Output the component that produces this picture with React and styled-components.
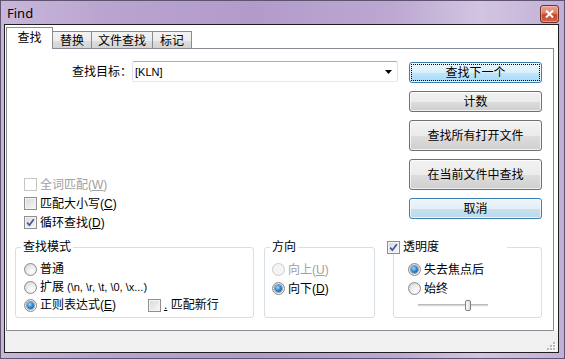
import styled, { createGlobalStyle } from "styled-components";

const GlobalStyle = createGlobalStyle`
  html, body {
    margin: 0;
    padding: 0;
  }
  body {
    width: 565px;
    height: 359px;
    overflow: hidden;
    font-family: "Liberation Sans", "Noto Sans CJK SC", sans-serif;
    font-size: 12px;
    color: #000;
  }
`;

const Window = styled.div`
  width: 565px;
  height: 359px;
  box-sizing: border-box;
  display: flex;
  flex-direction: column;
  padding: 0 6px 6px 4px;
  background: linear-gradient(
    90deg,
    #c8b7da 0%,
    #b9a3cf 20%,
    #b29bca 45%,
    #bda8d2 70%,
    #d2c5e1 85%,
    #c2afd7 100%
  );
  box-shadow: inset 0 0 0 1px #5e5470;
`;

const TitleBar = styled.div`
  height: 24px;
  display: flex;
  align-items: flex-start;
  justify-content: space-between;
  flex-shrink: 0;
`;

const Title = styled.span`
  font-family: "Noto Sans", "Liberation Sans", sans-serif;
  font-size: 13px;
  line-height: 16px;
  margin: 5px 0 0 3px;
  color: #000;
`;

const CloseBtn = styled.div`
  width: 19px;
  height: 18px;
  margin-top: 5px;
  box-sizing: border-box;
  border: 1px solid #6e3226;
  border-radius: 3px;
  background: linear-gradient(#e9a594 0%, #dd7d66 45%, #c6452a 55%, #d3674c 100%);
  box-shadow: inset 0 0 0 1px rgba(255, 210, 200, 0.45);
  display: flex;
  align-items: center;
  justify-content: center;
`;

const Client = styled.div`
  flex: 1;
  display: flex;
  flex-direction: column;
  background: #fff;
  border: 1px solid #1e1e1e;
`;

const Body = styled.div`
  flex: 1;
  display: flex;
  flex-direction: column;
  padding: 2px 4px 0 1px;
`;

const TabBar = styled.div`
  display: flex;
  align-items: flex-end;
  height: 22px;
  margin-bottom: -1px;
`;

const Tab = styled.div`
  width: ${(p) => p.$w}px;
  height: ${(p) => (p.$active ? 22 : 18)}px;
  box-sizing: border-box;
  text-align: center;
  line-height: 14px;
  padding-top: ${(p) => (p.$active ? 3 : 2)}px;
  border: 1px solid #898c95;
  border-bottom: none;
  border-left: ${(p) => (p.$first ? "1px solid #898c95" : "none")};
  background: ${(p) =>
    p.$active
      ? "#fff"
      : "linear-gradient(#f3f3f3 0%, #ebebeb 50%, #dedede 51%, #d2d2d2 100%)"};
  position: ${(p) => (p.$active ? "relative" : "static")};
  z-index: ${(p) => (p.$active ? 1 : "auto")};
`;

const Panel = styled.div`
  flex: 1;
  display: flex;
  flex-direction: column;
  border: 1px solid #898c95;
  background: #fff;
`;

const TopSection = styled.div`
  display: grid;
  grid-template-columns: 391px 133px;
  column-gap: 11px;
  padding-top: 12px;
`;

const LeftCol = styled.div`
  display: flex;
  flex-direction: column;
`;

const ComboRow = styled.div`
  display: flex;
  align-items: center;
  margin-left: 65px;
  height: 21px;
`;

const Label = styled.span`
  width: 60px;
  line-height: 14px;
`;

const Combo = styled.div`
  width: 266px;
  height: 21px;
  box-sizing: border-box;
  border: 1px solid #abadb3;
  border-color: #abadb3 #dbdfe6 #e3e9ef #e2e3ea;
  border-radius: 2px;
  display: flex;
  align-items: center;
  justify-content: space-between;
  padding: 0 5px 0 2px;
  font-size: 11px;
`;

const CheckList = styled.div`
  display: flex;
  flex-direction: column;
  margin-top: 93px;
  padding-left: 17px;
`;

const Row = styled.div`
  display: flex;
  align-items: center;
  gap: 3px;
  height: ${(p) => p.$h || 19}px;
  margin-left: ${(p) => p.$ml || 0}px;
  line-height: 14px;
  color: ${(p) => (p.$disabled ? "#a0a0a0" : "#000")};
  white-space: nowrap;
`;

const Box = styled.span`
  width: 13px;
  height: 13px;
  flex-shrink: 0;
  box-sizing: border-box;
  border: 1px solid ${(p) => (p.$disabled ? "#c7c7c7" : "#8e8f8f")};
  background: ${(p) =>
    p.$disabled ? "#fff" : "linear-gradient(135deg, #d8d8d8 0%, #f8f8f8 100%)"};
  box-shadow: inset 0 0 0 1px ${(p) => (p.$disabled ? "#fff" : "#f4f4f4")};
  display: flex;
  align-items: center;
  justify-content: center;
`;

const Dot = styled.span`
  width: 13px;
  height: 13px;
  flex-shrink: 0;
  box-sizing: border-box;
  border-radius: 50%;
  border: 1px solid ${(p) => (p.$disabled ? "#cacaca" : "#8b8b8b")};
  background: ${(p) =>
    p.$disabled
      ? "#f4f4f4"
      : "radial-gradient(circle at 65% 70%, #ffffff 0%, #ececec 45%, #cfcfcf 100%)"};
  display: flex;
  align-items: center;
  justify-content: center;
  &::after {
    content: "";
    display: ${(p) => (p.$checked ? "block" : "none")};
    width: 7px;
    height: 7px;
    border-radius: 50%;
    background: radial-gradient(circle at 40% 35%, #9fdcff 0%, #2f8cd4 45%, #0b4485 100%);
    box-shadow: 0 0 0 1px rgba(30, 60, 110, 0.45);
  }
`;

const U = styled.u`
  text-decoration: underline;
`;

const Small = styled.span`
  font-size: 11px;
  margin-left: 3px;
`;

const ButtonCol = styled.div`
  display: flex;
  flex-direction: column;
  gap: 8px;
  margin-top: 1px;
`;

const Button = styled.div`
  height: ${(p) => (p.$tall ? 31 : 21)}px;
  box-sizing: border-box;
  border: 1px solid ${(p) => (p.$variant === "grey" ? "#707070" : "#3c7fb1")};
  border-radius: 3px;
  display: flex;
  align-items: center;
  justify-content: center;
  line-height: 14px;
  background: ${(p) =>
    p.$variant === "focus"
      ? "linear-gradient(#eaf6fd 0%, #d9f0fc 50%, #bee6fd 51%, #a7d9f5 100%)"
      : p.$variant === "soft"
      ? "linear-gradient(#eef5fb 0%, #e3eef7 50%, #c9e1f0 51%, #bcd8ea 100%)"
      : "linear-gradient(#f2f2f2 0%, #ebebeb 50%, #dddddd 51%, #cfcfcf 100%)"};
  box-shadow: inset 0 0 0 1px rgba(255, 255, 255, 0.7);
  outline: ${(p) => (p.$variant === "focus" ? "1px dotted #000" : "none")};
  outline-offset: -3px;
`;

const BottomSection = styled.div`
  display: flex;
  margin: 9px 0 0 8px;
`;

const Group = styled.fieldset`
  width: ${(p) => p.$w}px;
  margin: 0 ${(p) => p.$mr || 0}px 0 0;
  box-sizing: border-box;
  border: 1px solid #d5dfe5;
  border-radius: 3px;
  padding: 6px 0 3px ${(p) => p.$pl}px;
  min-inline-size: 0;
`;

const Legend = styled.legend`
  padding: 0 ${(p) => p.$pr || 2}px 0 ${(p) => (p.$pl !== undefined ? p.$pl : 2)}px;
  margin-left: ${(p) => p.$ml}px;
  line-height: 13px;
  background: #fff;
  display: flex;
  align-items: center;
  gap: 3px;
`;

const SliderRow = styled.div`
  display: flex;
  align-items: center;
  height: 14px;
  margin-left: 10px;
`;

const Track = styled.span`
  width: ${(p) => p.$w}px;
  height: 3px;
  box-sizing: border-box;
  border-top: 1px solid #b9b9b9;
  border-bottom: 1px solid #f4f4f4;
  background: #dadada;
`;

const Thumb = styled.span`
  width: 6px;
  height: 11px;
  box-sizing: border-box;
  border: 1px solid #7f7f7f;
  border-radius: 2px;
  background: linear-gradient(90deg, #fdfdfd, #dcdcdc);
`;

const StatusBar = styled.div`
  height: 20px;
  flex-shrink: 0;
  background: #f0f0f0;
  display: flex;
  justify-content: flex-end;
  align-items: flex-end;
  padding: 0 2px 1px 0;
`;

const Check = () => (
  <svg width="9" height="9" viewBox="0 0 9 9">
    <path d="M1.2 4.6 L3.4 7.2 L7.8 1.2" fill="none" stroke="#3f56a0" strokeWidth="1.7" />
  </svg>
);

const CheckBox = ({ checked, disabled, children }) => (
  <Row $disabled={disabled}>
    <Box $disabled={disabled}>{checked && <Check />}</Box>
    <span>{children}</span>
  </Row>
);

const RadioItem = ({ checked, disabled, h, children }) => (
  <Row $disabled={disabled} $h={h}>
    <Dot $checked={checked} $disabled={disabled} />
    <span>{children}</span>
  </Row>
);

const Grip = () => (
  <svg width="10" height="10" viewBox="0 0 10 10">
    {[
      [7, 1],
      [4, 4],
      [7, 4],
      [1, 7],
      [4, 7],
      [7, 7],
    ].map(([x, y]) => (
      <g key={`${x}-${y}`}>
        <rect x={x + 1} y={y + 1} width="2" height="2" fill="#fff" />
        <rect x={x} y={y} width="2" height="2" fill="#b8b8b8" />
      </g>
    ))}
  </svg>
);

export default function App() {
  return (
    <>
      <GlobalStyle />
      <Window>
        <TitleBar>
          <Title>Find</Title>
          <CloseBtn>
            <svg width="9" height="8" viewBox="0 0 9 8">
              <path
                d="M1 0.5 L8 7.5 M8 0.5 L1 7.5"
                stroke="#fff"
                strokeWidth="2"
                fill="none"
              />
            </svg>
          </CloseBtn>
        </TitleBar>
        <Client>
          <Body>
            <TabBar>
              <Tab $active $first $w={47}>查找</Tab>
              <Tab $w={39}>替换</Tab>
              <Tab $w={61}>文件查找</Tab>
              <Tab $w={39}>标记</Tab>
            </TabBar>
            <Panel>
              <TopSection>
                <LeftCol>
                  <ComboRow>
                    <Label>查找目标：</Label>
                    <Combo>
                      <span>[KLN]</span>
                      <svg width="7" height="4" viewBox="0 0 7 4">
                        <polygon points="0,0 7,0 3.5,4" fill="#000" />
                      </svg>
                    </Combo>
                  </ComboRow>
                  <CheckList>
                    <CheckBox disabled>
                      全词匹配(<U>W</U>)
                    </CheckBox>
                    <CheckBox>
                      匹配大小写(<U>C</U>)
                    </CheckBox>
                    <CheckBox checked>
                      循环查找(<U>D</U>)
                    </CheckBox>
                  </CheckList>
                </LeftCol>
                <ButtonCol>
                  <Button $variant="focus">查找下一个</Button>
                  <Button $variant="grey">计数</Button>
                  <Button $variant="grey" $tall>
                    查找所有打开文件
                  </Button>
                  <Button $variant="grey" $tall>
                    在当前文件中查找
                  </Button>
                  <Button $variant="soft">取消</Button>
                </ButtonCol>
              </TopSection>
              <BottomSection>
                <Group $w={239} $mr={10} $pl={8}>
                  <Legend $ml={-3}>查找模式</Legend>
                  <RadioItem h={18}>普通</RadioItem>
                  <RadioItem h={18}>
                    扩展<Small>(\n, \r, \t, \0, \x...)</Small>
                  </RadioItem>
                  <Row $h={18}>
                    <RadioItem h={18} checked>
                      正则表达式(<U>E</U>)
                    </RadioItem>
                    <Row $h={18} $ml={29}>
                      <Box />
                      <span>
                        <U>.</U> 匹配新行
                      </span>
                    </Row>
                  </Row>
                </Group>
                <Group $w={111} $mr={18} $pl={7}>
                  <Legend $ml={-2}>方向</Legend>
                  <RadioItem disabled>
                    向上(<U>U</U>)
                  </RadioItem>
                  <RadioItem checked>
                    向下(<U>D</U>)
                  </RadioItem>
                </Group>
                <Group $w={149} $pl={14}>
                  <Legend $ml={-21} $pl={0} $pr={68}>
                    <Box>
                      <Check />
                    </Box>
                    <span>透明度</span>
                  </Legend>
                  <RadioItem checked>失去焦点后</RadioItem>
                  <RadioItem>始终</RadioItem>
                  <SliderRow>
                    <Track $w={47} />
                    <Thumb />
                    <Track $w={17} />
                  </SliderRow>
                </Group>
              </BottomSection>
            </Panel>
          </Body>
          <StatusBar>
            <Grip />
          </StatusBar>
        </Client>
      </Window>
    </>
  );
}
